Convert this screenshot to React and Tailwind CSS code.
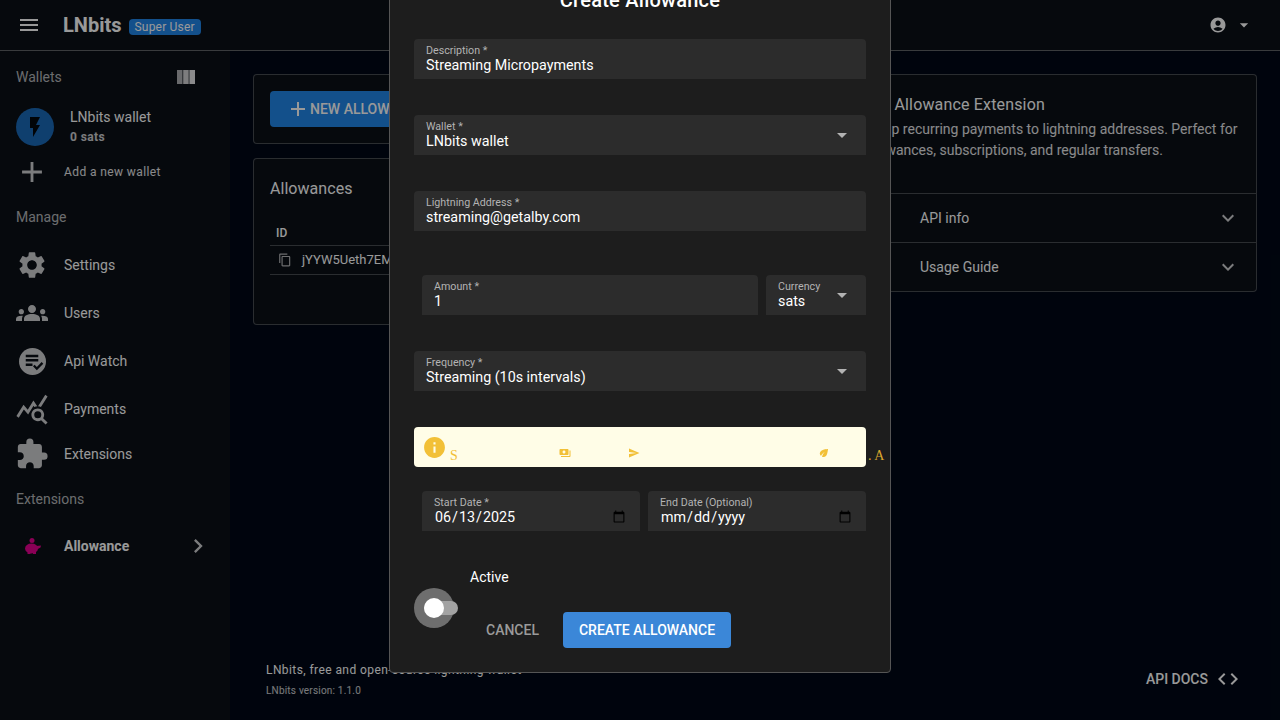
import {
  MdAccountCircle,
  MdAdd,
  MdArrowDropDown,
  MdChevronRight,
  MdCode,
  MdContentCopy,
  MdEco,
  MdExpandMore,
  MdExtension,
  MdFlashOn,
  MdGroups,
  MdInfo,
  MdMenu,
  MdPayments,
  MdQueryStats,
  MdSend,
  MdSettings,
} from 'react-icons/md'

const ApiWatchIcon = ({ className }) => (
  <svg viewBox="0 0 28 28" className={className}>
    <circle cx="14" cy="14" r="14" fill="currentColor" />
    <path d="M7 7h13v2.600H7zM7 11.500h13v2.600H7zM7 16h7v2.600H7z" fill="#0a0f17" />
    <path d="M14.500 19l1.700-1.700 2.300 2.300 5-5 1.700 1.700-6.700 6.700z" fill="#0a0f17" />
  </svg>
)

const ColumnsIcon = ({ className }) => (
  <svg viewBox="0 0 18 14" className={className}>
    <path d="M0 0h5.500v14H0z" fill="currentColor" opacity="0.75" />
    <path d="M6.200 0h5.500v14H6.200z" fill="currentColor" opacity="0.9" />
    <path d="M12.400 0H18v14h-5.600z" fill="currentColor" />
  </svg>
)

const PiggyIcon = ({ className }) => (
  <svg viewBox="0 0 18 18" className={className}>
    <circle cx="9" cy="3.500" r="2.500" fill="currentColor" />
    <ellipse cx="8.500" cy="11.500" rx="6.500" ry="5" fill="currentColor" />
    <path d="M13 9l5-.5-.5 2-3.500 2zM4.500 14h3v3h-3zM10 14h3v3h-3z" fill="currentColor" />
  </svg>
)

const NAV_ITEMS = [
  { label: 'Settings', icon: <MdSettings className="size-[32px]" />, className: 'h-[48px]' },
  { label: 'Users', icon: <MdGroups className="size-[32px]" />, className: 'h-[48px]' },
  { label: 'Api Watch', icon: <ApiWatchIcon className="size-[27px]" />, className: 'h-[48px]' },
  { label: 'Payments', icon: <MdQueryStats className="size-[34px]" />, className: 'h-[48px]' },
  { label: 'Extensions', icon: <MdExtension className="size-[34px]" />, className: 'h-[42px]' },
]

function Sidebar() {
  return (
    <aside className="w-[230px] shrink-0 bg-[#0a0f17] text-white">
      <div className="flex h-[52px] items-center justify-between pl-[16px] pr-[35px] text-[14px] text-white/70">
        <span>Wallets</span>
        <ColumnsIcon className="h-[14px] w-[18px] text-white/90" />
      </div>
      <div className="flex h-[48px] items-center pl-[16px]">
        <div className="flex size-[38px] items-center justify-center rounded-full bg-[#1a6ab8]">
          <MdFlashOn className="size-[24px] text-[#03070d]" />
        </div>
        <div className="ml-[16px]">
          <div className="text-[14px] leading-[20px]">LNbits wallet</div>
          <div className="text-[12px] leading-[20px] font-bold tracking-[0.4px] text-white/80">0 sats</div>
        </div>
      </div>
      <div className="flex h-[42px] items-center pl-[15px]">
        <MdAdd className="size-[34px] text-white/80" />
        <span className="ml-[15px] text-[12px] tracking-[0.4px] text-white/90">Add a new wallet</span>
      </div>
      <div className="flex h-[48px] items-center pl-[16px] text-[14px] text-white/70">Manage</div>
      {NAV_ITEMS.map((item) => (
        <div key={item.label} className={`flex items-center ${item.className}`}>
          <div className="flex w-[64px] shrink-0 items-center justify-center text-white/80">{item.icon}</div>
          <span className="text-[14px]">{item.label}</span>
        </div>
      ))}
      <div className="mt-[2px] flex h-[45px] items-center pl-[16px] text-[14px] text-white/70">Extensions</div>
      <div className="flex h-[48px] items-center">
        <div className="flex w-[64px] shrink-0 items-center justify-center">
          <PiggyIcon className="size-[18px] text-[#e6008f]" />
        </div>
        <span className="text-[14px] font-bold">Allowance</span>
        <MdChevronRight className="ml-[55px] size-[28px] text-white/80" />
      </div>
    </aside>
  )
}

function ExpansionRow({ label }) {
  return (
    <div className="flex h-[49px] items-center justify-between border-t border-white/25 pl-[72px] pr-[16px] text-[14px]">
      <span>{label}</span>
      <MdExpandMore className="size-[24px] text-white/80" />
    </div>
  )
}

function MainContent() {
  return (
    <main className="relative flex flex-1 gap-[16px] bg-[#000816] pl-[23px] pr-[23px] pt-[23px] text-white">
      <div className="w-[578px]">
        <section className="rounded border border-white/25 bg-[#0a0f17] p-[16px]">
          <div className="flex h-[36px] w-[190px] items-center rounded bg-[#2085e8] pl-[16px] text-[14px] font-medium">
            <MdAdd className="size-[24px]" />
            <span className="whitespace-nowrap">NEW ALLOWANCE</span>
          </div>
        </section>
        <section className="mt-[14px] h-[167px] rounded border border-white/25 bg-[#0a0f17] px-[16px]">
          <h2 className="pt-[18px] text-[16px] leading-[24px] tracking-[0.05px]">Allowances</h2>
          <div className="mt-[19px] flex h-[26px] items-center border-b border-white/25 pl-[6px] text-[12px] font-medium">
            ID
          </div>
          <div className="flex h-[29px] items-center border-b border-white/25 pl-[8px] text-[13px]">
            <MdContentCopy className="size-[14px] text-white/70" />
            <span className="ml-[10px] whitespace-nowrap">jYYW5Ueth7EMn2qk</span>
          </div>
        </section>
      </div>
      <section className="h-[218px] w-[410px] rounded border border-white/25 bg-[#0a0f17]">
        <div className="h-[118px] px-[15px] pt-[16px]">
          <h2 className="text-[16px] leading-[28px] tracking-[0.16px]">The Allowance Extension</h2>
          <p className="text-[14px] leading-[21px] text-white/90">
            <span className="-ml-[3px]">Set up</span> recurring payments to lightning addresses. Perfect for allowances,
            subscriptions, and regular transfers.
          </p>
        </div>
        <ExpansionRow label="API info" />
        <ExpansionRow label="Usage Guide" />
      </section>
      <footer className="absolute bottom-[3px] left-0 right-0 flex h-[74px] items-center justify-between pl-[36px] pr-[40px]">
        <div>
          <div className="pt-[1px] text-[12px] leading-[18px] tracking-[0.42px]">
            LNbits, free and open-source lightning wallet
          </div>
          <div className="mt-[3px] text-[10px] leading-[18px] tracking-[0.2px] text-white/80">LNbits version: 1.1.0</div>
        </div>
        <div className="-mt-[2px] flex items-center text-[14px] font-medium">
          API DOCS
          <MdCode className="ml-[8px] size-[24px]" />
        </div>
      </footer>
    </main>
  )
}

function Field({ label, value, select, className = '' }) {
  return (
    <div className={`relative h-[40px] rounded-t bg-[#2c2c2c] pl-[12px] ${className}`}>
      <div className="pt-[6px] text-[10.700px] leading-[12px] text-[#b3b3b3]">{label}</div>
      <div className="-mt-[1px] text-[14.300px] leading-[19px] text-white">{value}</div>
      {select && <MdArrowDropDown className="absolute right-[12px] top-[8px] size-[24px] text-[#b3b3b3]" />}
    </div>
  )
}

function DateField({ label, value }) {
  return (
    <div className="h-[40px] flex-1 rounded-t bg-[#2c2c2c] px-[12px]">
      <div className="pt-[6px] text-[10.700px] leading-[12px] text-[#b3b3b3]">{label}</div>
      <input
        type="date"
        defaultValue={value}
        className="-mt-[1px] block h-[19px] w-full border-0 bg-transparent p-0 text-[14.300px] text-white outline-none"
      />
    </div>
  )
}

function CreateDialog() {
  return (
    <div className="absolute inset-0 overflow-hidden bg-black/40">
      <div className="absolute bottom-[47px] left-[389px] w-[502px] rounded border border-[#555] bg-[#1d1d1d] px-[24px] pb-[24px] text-white">
        <h2 className="mb-[25px] text-center text-[20px] leading-[28px] font-medium tracking-[0.25px]">Create Allowance</h2>
        <Field label="Description *" value="Streaming Micropayments" />
        <Field className="mt-[36px]" label="Wallet *" value="LNbits wallet" select />
        <Field className="mt-[36px]" label="Lightning Address *" value="streaming@getalby.com" />
        <div className="mt-[44px] flex gap-[8px] pl-[8px]">
          <Field className="flex-1" label="Amount *" value="1" />
          <Field className="w-[100px]" label="Currency" value="sats" select />
        </div>
        <Field className="mt-[36px]" label="Frequency *" value="Streaming (10s intervals)" select />
        <div className="relative mt-[36px] h-[40px] whitespace-nowrap rounded bg-[#fffde7] font-['Liberation_Serif',serif] text-[14px] text-[#f2c037]">
          <MdInfo className="absolute left-[8px] top-[8px] size-[25px]" />
          <span className="absolute left-[36px] top-[18px]">S</span>
          <MdPayments className="absolute left-[145px] top-[20px] size-[12px]" />
          <MdSend className="absolute left-[214px] top-[20px] size-[12px]" />
          <MdEco className="absolute left-[404px] top-[20px] size-[12px]" />
          <span className="absolute left-[454px] top-[18px] text-[#d9a62e]">. A</span>
        </div>
        <div className="mt-[24px] flex gap-[8px] pl-[8px]">
          <DateField label="Start Date *" value="2025-06-13" />
          <DateField label="End Date (Optional)" />
        </div>
        <div className="mt-[37px] flex">
          <div className="relative mt-[20px] h-[40px] w-[40px] shrink-0 rounded-full bg-[#6e6e6e]">
            <div className="absolute left-[10px] top-[13px] h-[14px] w-[34px] rounded-full bg-[#a3a3a3]" />
            <div className="absolute left-[10px] top-[10px] size-[20px] rounded-full bg-white" />
          </div>
          <div className="ml-[16px] flex-1">
            <div className="text-[14px] leading-[18px]">Active</div>
            <div className="mt-[26px] flex gap-[8px]">
              <div className="flex h-[36px] items-center px-[16px] text-[14px] font-medium text-[#9a9a9a]">CANCEL</div>
              <div className="flex h-[36px] items-center rounded bg-[#3b87d8] px-[16px] text-[14px] font-medium">
                CREATE ALLOWANCE
              </div>
            </div>
          </div>
        </div>
      </div>
    </div>
  )
}

function App() {
  return (
    <div className="relative h-screen overflow-hidden bg-[#000816] font-['Roboto',sans-serif]">
      <header className="flex h-[51px] items-center justify-between border-b border-[#606366] bg-[#0a0f17] pl-[17px] pr-[26px] text-white">
        <div className="flex items-center">
          <MdMenu className="size-[24px]" />
          <span className="ml-[22px] text-[20px] font-bold">LNbits</span>
          <span className="ml-[7px] mt-[4px] rounded bg-[#2085e8] px-[6px] text-[12px] leading-[16px] tracking-[0.2px]">
            Super User
          </span>
        </div>
        <div className="flex items-center">
          <MdAccountCircle className="size-[18px]" />
          <MdArrowDropDown className="ml-[7px] size-[20px]" />
        </div>
      </header>
      <div className="flex h-[669px]">
        <Sidebar />
        <MainContent />
      </div>
      <CreateDialog />
    </div>
  )
}

export default App
